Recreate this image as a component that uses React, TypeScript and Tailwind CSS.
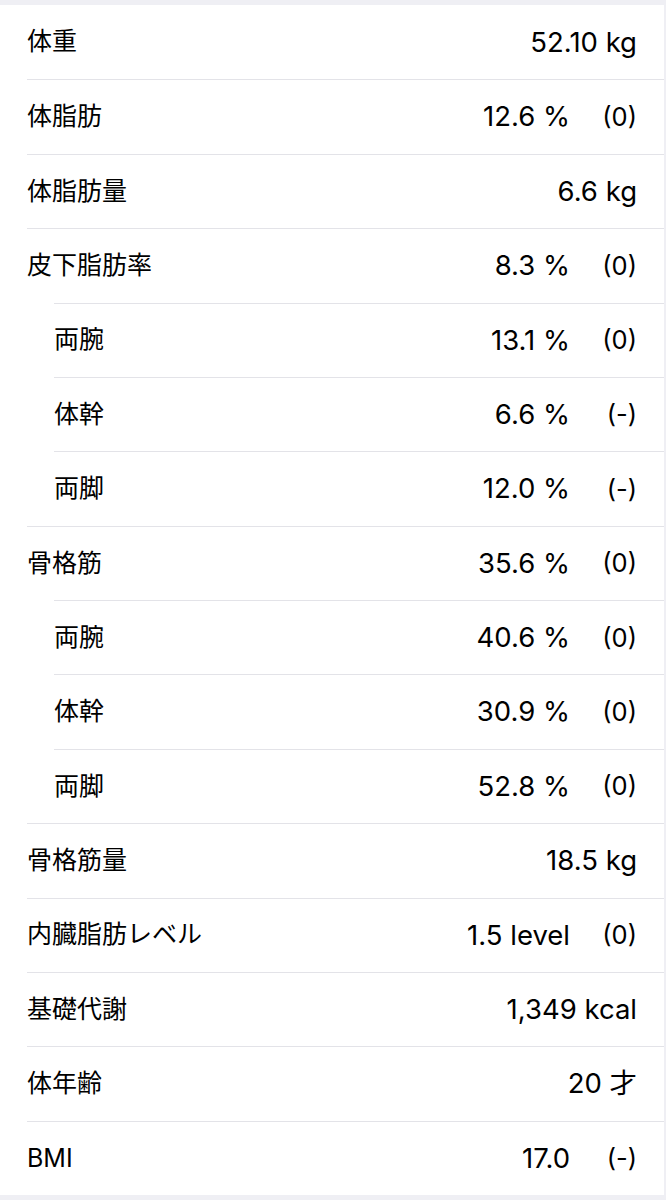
type Row = {
    label: string;
    value: string;
    note?: string;
    sub?: boolean;
};

const rows: Row[] = [
    {label: "体重", value: "52.10 kg"},
    {label: "体脂肪", value: "12.6 %", note: "(0)"},
    {label: "体脂肪量", value: "6.6 kg"},
    {label: "皮下脂肪率", value: "8.3 %", note: "(0)"},
    {label: "両腕", value: "13.1 %", note: "(0)", sub: true},
    {label: "体幹", value: "6.6 %", note: "(-)", sub: true},
    {label: "両脚", value: "12.0 %", note: "(-)", sub: true},
    {label: "骨格筋", value: "35.6 %", note: "(0)"},
    {label: "両腕", value: "40.6 %", note: "(0)", sub: true},
    {label: "体幹", value: "30.9 %", note: "(0)", sub: true},
    {label: "両脚", value: "52.8 %", note: "(0)", sub: true},
    {label: "骨格筋量", value: "18.5 kg"},
    {label: "内臓脂肪レベル", value: "1.5 level", note: "(0)"},
    {label: "基礎代謝", value: "1,349 kcal"},
    {label: "体年齢", value: "20 才"},
    {label: "BMI", value: "17.0", note: "(-)"},
];

function MeasureRow({row, first}: { row: Row; first: boolean }) {
    return (
        <div className="flex-1 flex min-h-0">
            <div
                className={
                    (row.sub ? "ml-[54px] " : "ml-[27px] ") +
                    (first ? "" : "border-t border-[#e3e3e8] ") +
                    "flex-1 flex items-center pr-[27px]"
                }
            >
                <span className="text-[25px]">{row.label}</span>
                <div className="ml-auto flex items-center">
                    <span className="text-[27.5px]">{row.value}</span>
                    {row.note && <span className="w-[67px] text-right text-[25.5px]">{row.note}</span>}
                </div>
            </div>
        </div>
    );
}

export default function App() {
    return (
        <div
            className="w-[666px] h-[1200px] bg-[#efeff4] py-[5px] pr-[2px] text-black"
            style={{fontFamily: 'Inter, "Noto Sans CJK JP", sans-serif'}}
        >
            <div className="h-full bg-white flex flex-col">
                {rows.map((r, i) => (
                    <MeasureRow key={i} row={r} first={i === 0}/>
                ))}
            </div>
        </div>
    );
}
